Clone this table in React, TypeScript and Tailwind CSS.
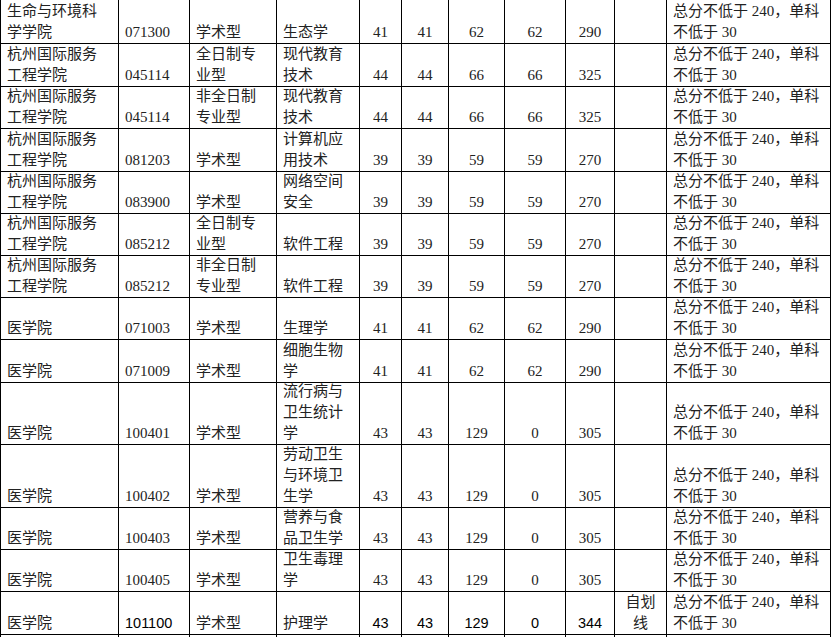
import React from 'react'

type Row = {
  h: number
  cells: string[]
  sans?: boolean
}

const RULE = ['总分不低于 240，单科', '不低于 30'].join('\n')

const rows: Row[] = [
  { h: 44, cells: ['生命与环境科\n学学院', '071300', '学术型', '生态学', '41', '41', '62', '62', '290', '', RULE] },
  { h: 43, cells: ['杭州国际服务\n工程学院', '045114', '全日制专\n业型', '现代教育\n技术', '44', '44', '66', '66', '325', '', RULE] },
  { h: 42, cells: ['杭州国际服务\n工程学院', '045114', '非全日制\n专业型', '现代教育\n技术', '44', '44', '66', '66', '325', '', RULE] },
  { h: 43, cells: ['杭州国际服务\n工程学院', '081203', '学术型', '计算机应\n用技术', '39', '39', '59', '59', '270', '', RULE] },
  { h: 42, cells: ['杭州国际服务\n工程学院', '083900', '学术型', '网络空间\n安全', '39', '39', '59', '59', '270', '', RULE] },
  { h: 42, cells: ['杭州国际服务\n工程学院', '085212', '全日制专\n业型', '软件工程', '39', '39', '59', '59', '270', '', RULE] },
  { h: 42, cells: ['杭州国际服务\n工程学院', '085212', '非全日制\n专业型', '软件工程', '39', '39', '59', '59', '270', '', RULE] },
  { h: 42, cells: ['医学院', '071003', '学术型', '生理学', '41', '41', '62', '62', '290', '', RULE] },
  { h: 43, cells: ['医学院', '071009', '学术型', '细胞生物\n学', '41', '41', '62', '62', '290', '', RULE] },
  { h: 62, cells: ['医学院', '100401', '学术型', '流行病与\n卫生统计\n学', '43', '43', '129', '0', '305', '', RULE] },
  { h: 63, cells: ['医学院', '100402', '学术型', '劳动卫生\n与环境卫\n生学', '43', '43', '129', '0', '305', '', RULE] },
  { h: 42, cells: ['医学院', '100403', '学术型', '营养与食\n品卫生学', '43', '43', '129', '0', '305', '', RULE] },
  { h: 42, cells: ['医学院', '100405', '学术型', '卫生毒理\n学', '43', '43', '129', '0', '305', '', RULE] },
  { h: 43, cells: ['医学院', '101100', '学术型', '护理学', '43', '43', '129', '0', '344', '自划\n线', RULE], sans: true },
  { h: 42, cells: ['', '', '', '', '', '', '', '', '', '', ''] },
]

// widths include the 1px right rule
const widths = [
  'w-[118px]', 'w-[71px]', 'w-[87px]', 'w-[83px]', 'w-[42px]', 'w-[47px]',
  'w-[56px]', 'w-[61px]', 'w-[49px]', 'w-[52px]', 'w-[164px]',
]

const serif = 'font-["Liberation_Serif","Noto_Sans_CJK_SC",serif]'
const sans = 'font-["Liberation_Sans","Noto_Sans_CJK_SC",sans-serif]'

function Cell({ text, col, h, sansRow }: { text: string; col: number; h: number; sansRow?: boolean }) {
  const centered = col >= 4 && col <= 9
  const useSans = sansRow && (col === 1 || (col >= 4 && col <= 8))
  return (
    <div
      className={`${widths[col]} shrink-0 flex flex-col justify-end border-r border-b border-black px-[6px] ${
        centered ? 'items-center text-center' : 'items-start text-left'
      } ${useSans ? `${sans} text-[14.5px] text-black` : `${serif} text-[15px] text-[#222]`} leading-[21px]`}
      style={{ height: h }}
    >
      {text.split('\n').map((line, i) => (
        <span key={i} className="block whitespace-nowrap">
          {line}
        </span>
      ))}
    </div>
  )
}

export default function App() {
  return (
    <div className="w-[834px] h-[637px] overflow-hidden bg-white">
      <div className="w-fit border-l border-black">
        {rows.map((row, r) => (
          <div key={r} className="flex">
            {row.cells.map((text, c) => (
              <Cell key={c} text={text} col={c} h={row.h} sansRow={row.sans} />
            ))}
          </div>
        ))}
      </div>
    </div>
  )
}
